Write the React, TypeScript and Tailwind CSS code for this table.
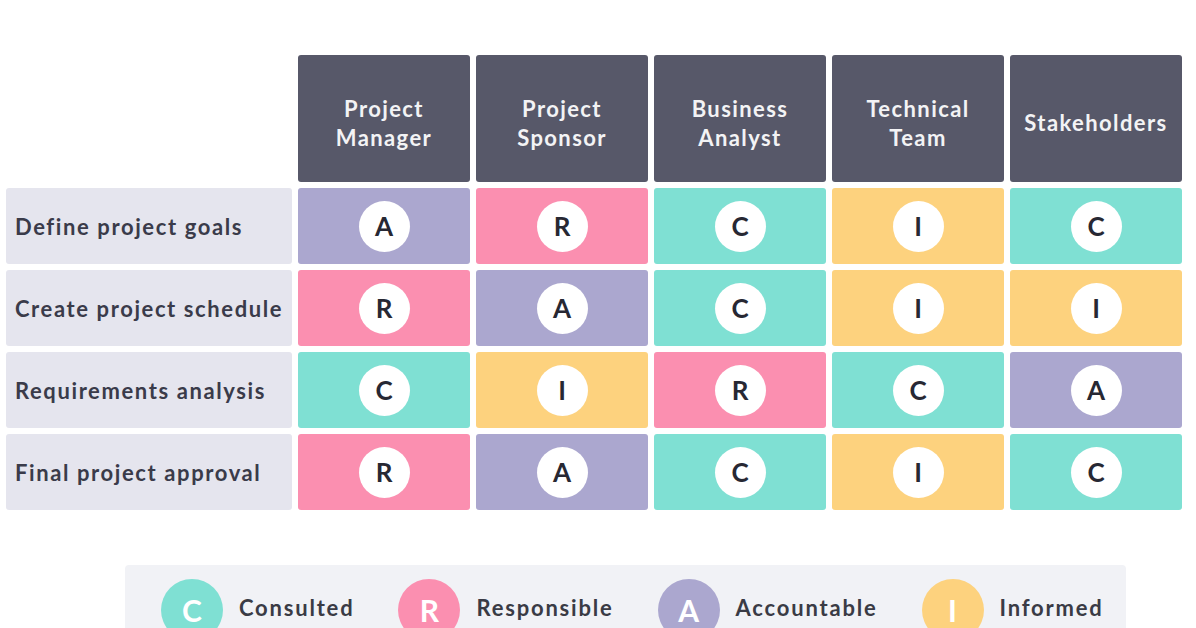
import React from 'react';

type Role = 'R' | 'A' | 'C' | 'I';

const roleColors: Record<Role, string> = {
  R: 'bg-[#fb8fb0]',
  A: 'bg-[#aba7cf]',
  C: 'bg-[#7fe0d3]',
  I: 'bg-[#fdd27e]',
};

const headers = [
  ['Project', 'Manager'],
  ['Project', 'Sponsor'],
  ['Business', 'Analyst'],
  ['Technical', 'Team'],
  ['Stakeholders'],
];

const rows: { task: string; roles: Role[] }[] = [
  { task: 'Define project goals', roles: ['A', 'R', 'C', 'I', 'C'] },
  { task: 'Create project schedule', roles: ['R', 'A', 'C', 'I', 'I'] },
  { task: 'Requirements analysis', roles: ['C', 'I', 'R', 'C', 'A'] },
  { task: 'Final project approval', roles: ['R', 'A', 'C', 'I', 'C'] },
];

const legend: { role: Role; label: string }[] = [
  { role: 'C', label: 'Consulted' },
  { role: 'R', label: 'Responsible' },
  { role: 'A', label: 'Accountable' },
  { role: 'I', label: 'Informed' },
];

export default function App() {
  return (
    <div className="w-[1196px] h-[628px] overflow-hidden bg-white font-['Lato','Open_Sans',sans-serif]">
      <div className="pt-[55px] pl-[6px]">
        <div className="grid grid-cols-[286px_repeat(5,172px)] grid-rows-[127px_repeat(4,76px)] gap-[6px]">
          <div />
          {headers.map((lines, i) => (
            <div
              key={i}
              className="bg-[#575869] rounded-[3px] flex flex-col items-center justify-center text-[#f3f3f5] text-[22px] font-bold leading-[29px] tracking-[1.4px] pt-[8px]"
            >
              {lines.map((l) => (
                <span key={l}>{l}</span>
              ))}
            </div>
          ))}
          {rows.map((row) => (
            <React.Fragment key={row.task}>
              <div className="bg-[#e5e5ee] rounded-[3px] flex items-center pl-[9px] text-[22px] font-bold text-[#3a3b4a] tracking-[1.6px]">
                {row.task}
              </div>
              {row.roles.map((r, i) => (
                <div key={i} className={`${roleColors[r]} rounded-[3px] flex items-center justify-center`}>
                  <div className="w-[51px] h-[51px] rounded-full bg-white flex items-center justify-center text-[26px] font-bold text-[#272833]">
                    {r}
                  </div>
                </div>
              ))}
            </React.Fragment>
          ))}
        </div>

        <div className="ml-[119px] mt-[55px] w-[1001px] h-[90px] bg-[#f1f2f6] rounded-t-[4px] flex items-start pt-[14px] pl-[36px] gap-[44px]">
          {legend.map((item) => (
            <div key={item.role} className="flex items-center gap-[16px]">
              <div
                className={`${roleColors[item.role]} w-[62px] h-[62px] rounded-full flex items-center justify-center text-white text-[30px] font-bold`}
              >
                {item.role}
              </div>
              <span className="text-[22px] font-bold text-[#3a3b45] tracking-[1.8px] -mt-[6px]">{item.label}</span>
            </div>
          ))}
        </div>
      </div>
    </div>
  );
}
